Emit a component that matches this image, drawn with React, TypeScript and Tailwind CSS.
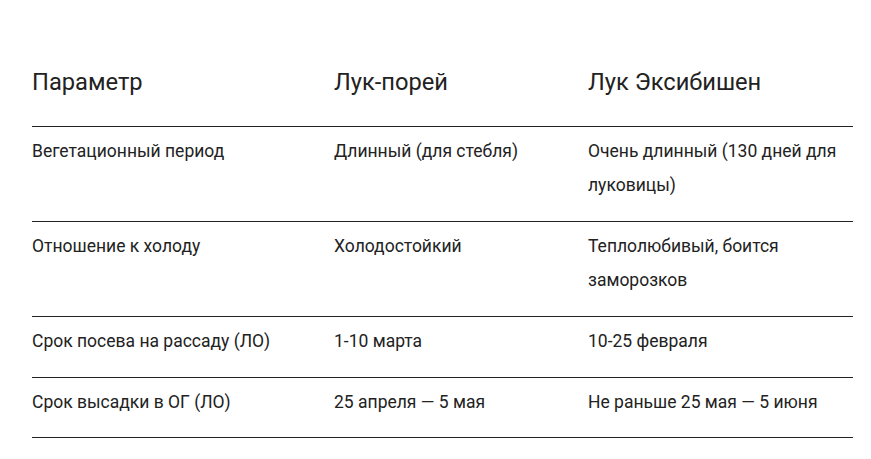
import React from "react";

const rows: [string, string, string][] = [
  ["Вегетационный период", "Длинный (для стебля)", "Очень длинный (130 дней для луковицы)"],
  ["Отношение к холоду", "Холодостойкий", "Теплолюбивый, боится заморозков"],
  ["Срок посева на рассаду (ЛО)", "1-10 марта", "10-25 февраля"],
  ["Срок высадки в ОГ (ЛО)", "25 апреля — 5 мая", "Не раньше 25 мая — 5 июня"],
];

export default function App() {
  return (
    <div
      className="w-[871px] h-[459px] overflow-hidden bg-white text-[#222222]"
      style={{ fontFamily: "Roboto, 'Noto Sans', sans-serif" }}
    >
      <div className="ml-[32px] w-[821px]">
        <div className="grid grid-cols-[302px_254px_265px] pt-[65px] pb-[27px] border-b border-[#222222] text-[23.7px] leading-[34px]">
          <div>Параметр</div>
          <div>Лук-порей</div>
          <div>Лук Эксибишен</div>
        </div>
        {rows.map((r, i) => (
          <div
            key={i}
            className={
              i === rows.length - 1
                ? "grid grid-cols-[302px_254px_265px] pt-[7px] pb-[18px] border-b border-[#222222] text-[17.5px] leading-[34px]"
                : "grid grid-cols-[302px_254px_265px] pt-[7px] pb-[19px] border-b border-[#222222] text-[17.5px] leading-[34px]"
            }
          >
            <div className="pr-4">{r[0]}</div>
            <div className="pr-4">{r[1]}</div>
            <div className="pr-2">{r[2]}</div>
          </div>
        ))}
      </div>
    </div>
  );
}
